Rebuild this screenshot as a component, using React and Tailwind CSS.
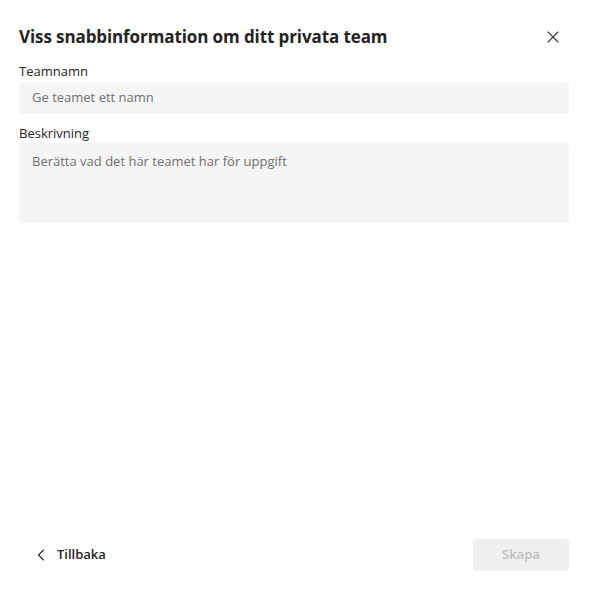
import { X, ChevronLeft } from 'lucide-react'

export default function App() {
  return (
    <div
      className="w-[591px] h-[592px] bg-white flex flex-col pl-[19px] pr-[22px] text-[#242424]"
      style={{ fontFamily: '"Open Sans", "Noto Sans", sans-serif' }}
    >
      {/* Header */}
      <div className="flex items-center justify-between pt-[24px] h-[50px]">
        <h1 className="text-[17px] font-bold tracking-[-0.1px] leading-6">
          Viss snabbinformation om ditt privata team
        </h1>
        <button className="w-[32px] h-[32px] flex items-center justify-center text-[#424242]">
          <X className="w-[20px] h-[20px]" strokeWidth={1.4} />
        </button>
      </div>

      {/* Form */}
      <div className="flex flex-col mt-[11px]">
        <label className="text-[13px] leading-5 mb-[1px]">Teamnamn</label>
        <div className="h-[32px] rounded-[4px] bg-[#f5f5f5] flex items-center px-[13px]">
          <span className="text-[13px] text-[#707070]">Ge teamet ett namn</span>
        </div>

        <label className="text-[13px] leading-5 mt-[9px]">Beskrivning</label>
        <div className="h-[80px] rounded-[4px] bg-[#f5f5f5] px-[13px] pt-[5px]">
          <span className="text-[13px] text-[#707070]">Berätta vad det här teamet har för uppgift</span>
        </div>
      </div>

      {/* Footer */}
      <div className="mt-auto mb-[21px] flex items-center justify-between">
        <button className="flex items-center gap-[6px] pl-[12px] h-[32px] text-[13px] font-semibold">
          <ChevronLeft className="w-[20px] h-[20px]" strokeWidth={1.3} />
          Tillbaka
        </button>
        <button className="w-[96px] h-[32px] rounded-[4px] bg-[#f0f0f0] text-[#bdbdbd] text-[13px] font-semibold">
          Skapa
        </button>
      </div>
    </div>
  )
}
